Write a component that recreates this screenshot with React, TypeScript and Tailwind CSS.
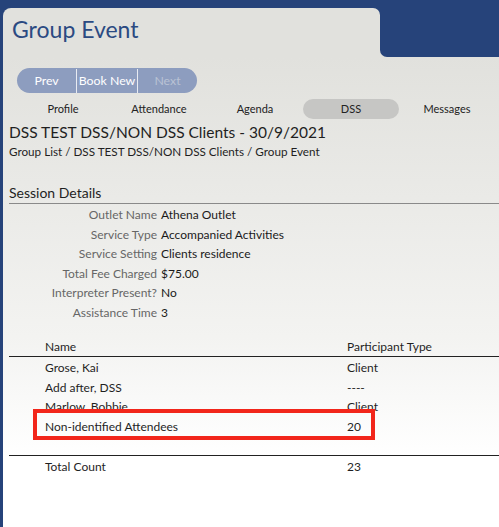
import React from "react";

const details: [string, string][] = [
  ["Outlet Name", "Athena Outlet"],
  ["Service Type", "Accompanied Activities"],
  ["Service Setting", "Clients residence"],
  ["Total Fee Charged", "$75.00"],
  ["Interpreter Present?", "No"],
  ["Assistance Time", "3"],
];

const participants: [string, string][] = [
  ["Grose, Kai", "Client"],
  ["Add after, DSS", "----"],
  ["Marlow, Bobbie", "Client"],
  ["Non-identified Attendees", "20"],
];

const tabs = ["Profile", "Attendance", "Agenda", "DSS", "Messages"];

export default function App() {
  return (
    <div className="w-[499px] h-[527px] bg-[#26437a] flex flex-col overflow-hidden font-['Lato','Open_Sans',sans-serif]">
      {/* header tab with notch into the blue frame */}
      <div className="flex h-[57px] shrink-0">
        <div className="ml-[3px] mt-[8px] w-[377px] bg-[#e1e1dd] rounded-tl-[8px] rounded-tr-[7px] pl-[9px] pt-[9px]">
          <h1 className="text-[23px] leading-[25px] text-[#2b4a82]">Group Event</h1>
        </div>
        <div className="flex-1 bg-[#e1e1dd]">
          <div className="h-full bg-[#26437a] rounded-bl-[7px]" />
        </div>
      </div>

      <div className="relative ml-[3px] flex-1 bg-[linear-gradient(to_bottom,#e1e1dd_0px,#f3f3f1_280px,#ffffff_400px)] text-[#1f1f1f]">
        {/* pager */}
        <div className="ml-[14px] mt-[11px] flex h-[25px] w-[180px] overflow-hidden rounded-full bg-[#8d9dbf] pt-px text-[12.3px]">
          <div className="flex w-[59px] items-center justify-center text-white">Prev</div>
          <div className="w-px bg-white/80" />
          <div className="flex w-[60px] items-center justify-center text-white">Book New</div>
          <div className="w-px bg-white/80" />
          <div className="flex flex-1 items-center justify-center text-[#b9c2d4]">Next</div>
        </div>

        {/* tabs */}
        <div className="ml-[12px] mt-[6px] flex h-[20px] text-[11px] text-[#222]">
          {tabs.map((t) => (
            <div
              key={t}
              className={
                t === "DSS"
                  ? "flex w-[96px] items-center justify-center rounded-full bg-[#c6c6c4]"
                  : "flex w-[96px] items-center justify-center"
              }
            >
              {t}
            </div>
          ))}
        </div>

        <h2 className="mt-[3px] pl-[6px] text-[15.5px] leading-[20px] text-[#1f1f1f]">
          DSS TEST DSS/NON DSS Clients - 30/9/2021
        </h2>
        <div className="mt-[1px] pl-[6px] text-[11.7px] leading-[16px] text-[#1f1f1f]">
          Group List / DSS TEST DSS/NON DSS Clients / Group Event
        </div>

        <div className="ml-[6px] mt-[25px] border-b border-[#8a8a8a] pb-[1px] text-[14px] leading-[18px] text-[#1f1f1f]">
          Session Details
        </div>

        <div className="mt-[1px] grid grid-cols-[154px_1fr] gap-x-[4px] text-[12px] leading-[19.5px]">
          {details.map(([label, value]) => (
            <React.Fragment key={label}>
              <div className="text-right text-[#666]">{label}</div>
              <div className="text-[#1a1a1a]">{value}</div>
            </React.Fragment>
          ))}
        </div>

        {/* participants */}
        <div className="ml-[6px] mt-[15px] text-[12px] text-[#1f1f1f]">
          <div className="flex h-[20px] items-center border-b border-[#222] leading-[20px]">
            <div className="w-[338px] pl-[36px]">Name</div>
            <div>Participant Type</div>
          </div>
          <div className="pt-px">
            {participants.map(([name, type]) => (
              <div key={name} className="flex leading-[19.6px]">
                <div className="w-[338px] pl-[36px]">{name}</div>
                <div>{type}</div>
              </div>
            ))}
          </div>
          <div className="mt-[19px] flex border-t border-[#222] pt-px leading-[20px]">
            <div className="w-[338px] pl-[36px]">Total Count</div>
            <div>23</div>
          </div>
        </div>

        {/* highlight around the non-identified row */}
        <div className="pointer-events-none absolute left-[30px] top-[352px] h-[31px] w-[342px] border-[4px] border-[#f2261b]" />
      </div>
    </div>
  );
}
